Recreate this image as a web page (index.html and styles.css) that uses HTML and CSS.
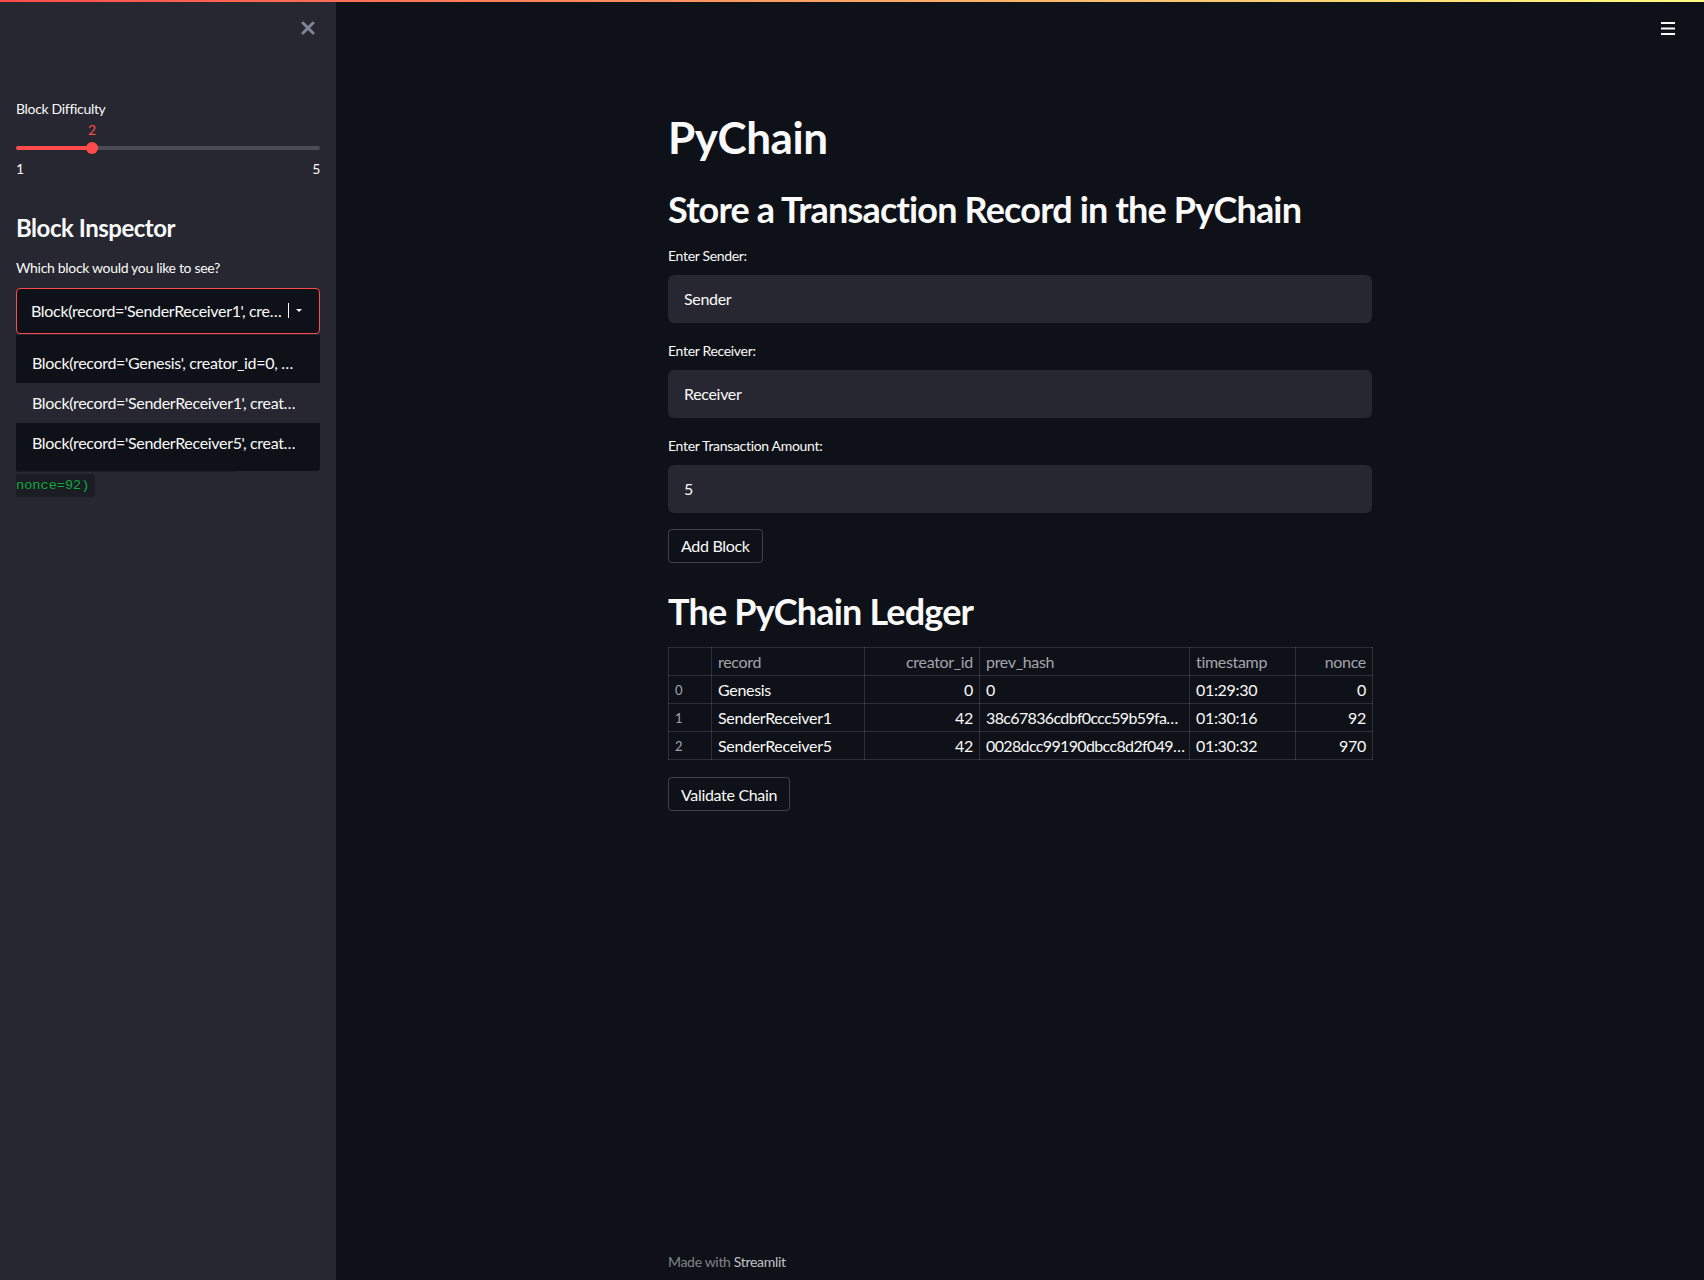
FILE: index.html
```html
<!DOCTYPE html>
<html lang="en">
<head>
<meta charset="utf-8">
<title>PyChain</title>
<link rel="stylesheet" href="styles.css">
</head>
<body>
<div class="decoration"></div>
<div class="app">
  <aside class="sidebar">
    <div class="sidebar-top">
      <button class="close-btn" aria-label="Close sidebar">
        <svg width="14" height="14" viewBox="0 0 14 14"><path d="M2 2L12 12M12 2L2 12" stroke="#808495" stroke-width="3" stroke-linecap="round"/></svg>
      </button>
    </div>
    <div class="slider-widget">
      <label class="widget-label">Block Difficulty</label>
      <div class="slider">
        <div class="slider-value-row"><span class="slider-value" style="left: 25%">2</span></div>
        <div class="slider-track-area">
          <div class="slider-track"><div class="slider-fill" style="width: 25%"></div></div>
          <div class="slider-thumb" style="left: 25%"></div>
        </div>
        <div class="slider-ticks"><span>1</span><span>5</span></div>
      </div>
    </div>
    <h2 class="sidebar-heading">Block Inspector</h2>
    <div class="select-widget">
      <label class="widget-label">Which block would you like to see?</label>
      <div class="select-wrap">
        <div class="select-box">
          <span class="select-value">Block(record='SenderReceiver1', cre…</span>
          <span class="select-cursor"></span>
          <svg class="select-caret" width="6" height="3" viewBox="0 0 6 3"><path d="M0 0H6L3 3Z" fill="#fafafa"/></svg>
        </div>
        <ul class="select-menu">
          <li>Block(record='Genesis', creator_id=0, …</li>
          <li class="is-active">Block(record='SenderReceiver1', creat…</li>
          <li>Block(record='SenderReceiver5', creat…</li>
        </ul>
      </div>
    </div>
    <p class="block-output"><code>Block(record='SenderReceiver1',<br>creator_id=42,<br>prev_hash='38c67836cdbf0ccc59b59fa<br>3e1f0c4a7d2b9e6f05c8a1d3b7e92f4c6',<br>timestamp='01:30:16.28491',<br>nonce=92)</code></p>
  </aside>

  <main class="main">
    <button class="menu-btn" aria-label="Main menu">
      <svg width="14" height="13" viewBox="0 0 14 13"><rect x="0" y="0" width="14" height="2" fill="#fafafa"/><rect x="0" y="5.5" width="14" height="2" fill="#fafafa"/><rect x="0" y="11" width="14" height="2" fill="#fafafa"/></svg>
    </button>
    <div class="block-container">
      <h1 class="title">PyChain</h1>
      <h2 class="header first-header">Store a Transaction Record in the PyChain</h2>

      <div class="text-widget">
        <label class="widget-label">Enter Sender:</label>
        <div class="text-input">Sender</div>
      </div>
      <div class="text-widget">
        <label class="widget-label">Enter Receiver:</label>
        <div class="text-input">Receiver</div>
      </div>
      <div class="text-widget">
        <label class="widget-label">Enter Transaction Amount:</label>
        <div class="text-input">5</div>
      </div>

      <button class="st-button add-button">Add Block</button>

      <h2 class="header ledger-header">The PyChain Ledger</h2>

      <table class="ledger">
        <colgroup>
          <col class="c-idx"><col class="c-record"><col class="c-creator"><col class="c-hash"><col class="c-time"><col class="c-nonce">
        </colgroup>
        <thead>
          <tr><th></th><th>record</th><th class="num">creator_id</th><th>prev_hash</th><th>timestamp</th><th class="num">nonce</th></tr>
        </thead>
        <tbody>
          <tr><td class="idx">0</td><td>Genesis</td><td class="num">0</td><td>0</td><td>01:29:30</td><td class="num">0</td></tr>
          <tr><td class="idx">1</td><td>SenderReceiver1</td><td class="num">42</td><td class="hash">38c67836cdbf0ccc59b59fa…</td><td>01:30:16</td><td class="num">92</td></tr>
          <tr><td class="idx">2</td><td>SenderReceiver5</td><td class="num">42</td><td class="hash">0028dcc99190dbcc8d2f049…</td><td>01:30:32</td><td class="num">970</td></tr>
        </tbody>
      </table>

      <button class="st-button validate-button">Validate Chain</button>
    </div>
    <footer class="footer">Made with <a class="footer-link">Streamlit</a></footer>
  </main>
</div>
</body>
</html>
```

FILE: styles.css
```css
* { box-sizing: border-box; }

html, body {
  margin: 0;
  padding: 0;
  height: 100%;
  background: #0e1117;
  color: #fafafa;
  font-family: "Lato", "Source Sans Pro", sans-serif;
  letter-spacing: -0.02em;
}

.decoration {
  position: fixed;
  top: 0;
  left: 0;
  right: 0;
  height: 2px;
  background: linear-gradient(90deg, #ff4b4b, #fffd80);
  z-index: 10;
}

.app {
  display: flex;
  min-height: 100vh;
}

/* ---------- Sidebar ---------- */
.sidebar {
  width: 336px;
  flex: 0 0 336px;
  background: #262730;
  padding: 0 16px;
  min-height: 100vh;
}

.sidebar-top {
  height: 55px;
  display: flex;
  justify-content: flex-end;
  align-items: center;
  padding-right: 5px;
}

.close-btn, .menu-btn {
  background: none;
  border: 0;
  padding: 0;
  margin: 0;
  display: flex;
  cursor: pointer;
}

.widget-label {
  display: block;
  font-size: 14px;
  line-height: 20px;
  color: #fafafa;
}

.slider-widget {
  margin-top: 44px;
}

.slider-value-row {
  position: relative;
  height: 20px;
  margin-top: 1px;
}

.slider-value {
  position: absolute;
  top: 0;
  transform: translateX(-50%);
  font-size: 14px;
  line-height: 20px;
  color: #ff4b4b;
}

.slider-track-area {
  position: relative;
  height: 16px;
  display: flex;
  align-items: center;
}

.slider-track {
  width: 100%;
  height: 4px;
  border-radius: 2px;
  background: #4b4c55;
  overflow: hidden;
}

.slider-fill {
  height: 100%;
  background: #ff4b4b;
}

.slider-thumb {
  position: absolute;
  top: 2px;
  width: 12px;
  height: 12px;
  margin-left: -6px;
  border-radius: 50%;
  background: #ff4b4b;
}

.slider-ticks {
  display: flex;
  justify-content: space-between;
  margin-top: 3px;
  font-size: 14px;
  line-height: 20px;
}

.sidebar-heading {
  margin: 35px 0 0;
  font-size: 24px;
  line-height: 1.2;
  font-weight: 700;
  letter-spacing: -0.02em;
}

.select-widget {
  margin-top: 15px;
}

.select-wrap {
  position: relative;
  margin-top: 10px;
}

.select-box {
  height: 46px;
  border: 1px solid #ff4b4b;
  border-radius: 4px;
  background: #0e1117;
  display: flex;
  align-items: center;
  padding: 0 17px 0 14px;
}

.select-value {
  flex: 1;
  min-width: 0;
  font-size: 16px;
  white-space: nowrap;
  overflow: hidden;
  text-overflow: ellipsis;
}

.select-cursor {
  width: 1px;
  height: 15px;
  background: #fafafa;
  margin: 0 7px 0 3px;
}

.select-caret {
  display: block;
}

.select-menu {
  position: absolute;
  top: calc(100% + 1px);
  left: 0;
  width: 100%;
  margin: 0;
  padding: 8px 0;
  list-style: none;
  background: #0e1117;
  border-radius: 0 0 4px 4px;
  z-index: 5;
}

.select-menu li {
  height: 40px;
  line-height: 40px;
  padding: 0 16px 0 16px;
  font-size: 16px;
  white-space: nowrap;
  overflow: hidden;
  text-overflow: ellipsis;
}

.select-menu li.is-active {
  background: #262730;
}

.block-output {
  margin: 17px 0 0;
  font-family: "Liberation Mono", "DejaVu Sans Mono", monospace;
  font-size: 13.6px;
  line-height: 24.6px;
  letter-spacing: 0;
}

.block-output code {
  font-family: inherit;
  font-size: inherit;
  color: #09ab3b;
  background: #1b1c24;
  padding: 4px 6px;
  border-radius: 4px;
}

/* ---------- Main ---------- */
.main {
  flex: 1;
  position: relative;
  display: flex;
  flex-direction: column;
  min-height: 100vh;
}

.menu-btn {
  position: absolute;
  top: 22px;
  right: 29px;
}

.block-container {
  width: 736px;
  margin: 0 auto;
  padding: 111px 16px 0;
  display: flex;
  flex-direction: column;
  align-items: flex-start;
}

.title {
  margin: 0;
  font-size: 44px;
  line-height: 1.2;
  font-weight: 700;
  letter-spacing: -0.01em;
}

.header {
  margin: 0;
  font-size: 36px;
  line-height: 1.2;
  font-weight: 700;
  letter-spacing: -0.023em;
}

.first-header { margin-top: 24px; }
.ledger-header { margin-top: 27px; }

.text-widget {
  width: 100%;
  margin-top: 13px;
}

.text-widget + .text-widget {
  margin-top: 16px;
}

.text-widget .widget-label {
  padding-top: 2px;
  margin-bottom: 9px;
}

.text-input {
  height: 48px;
  background: #262730;
  border-radius: 6px;
  padding: 0 16px;
  display: flex;
  align-items: center;
  font-size: 16px;
}

.st-button {
  height: 34px;
  padding: 0 12px;
  background: #0e1117;
  color: #fafafa;
  border: 1px solid rgba(250, 250, 250, 0.2);
  border-radius: 4px;
  font-family: inherit;
  font-size: 16px;
  letter-spacing: -0.02em;
}

.add-button { margin-top: 16px; }
.validate-button { margin-top: 17px; }

.ledger {
  width: 100%;
  margin-top: 14px;
  border-collapse: collapse;
  table-layout: fixed;
  font-size: 16px;
}

.c-idx { width: 43px; }
.c-record { width: 153px; }
.c-creator { width: 115px; }
.c-hash { width: 210px; }
.c-time { width: 106px; }
.c-nonce { width: 77px; }

.ledger th, .ledger td {
  height: 28px;
  padding: 0 6px;
  border: 1px solid rgba(250, 250, 250, 0.13);
  text-align: left;
  white-space: nowrap;
  overflow: hidden;
  text-overflow: ellipsis;
}

.ledger th {
  font-weight: 400;
  color: #a3a5ab;
}

.ledger .num { text-align: right; }

.ledger td.hash {
  letter-spacing: -0.04em;
  padding-right: 4px;
}

.ledger td.idx {
  color: #a3a5ab;
  font-size: 13px;
}

.footer {
  margin-top: auto;
  width: 736px;
  margin-left: auto;
  margin-right: auto;
  padding: 0 16px 8px;
  font-size: 14px;
  line-height: 20px;
  color: #808389;
}

.footer-link {
  color: #c0c2c7;
}
```
